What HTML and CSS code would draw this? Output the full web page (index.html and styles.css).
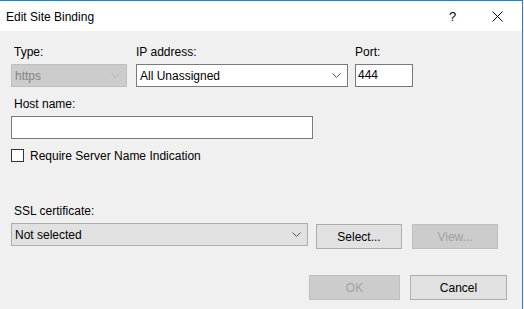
FILE: index.html
```html
<!DOCTYPE html>
<html lang="en">
<head>
    <meta charset="UTF-8">
    <meta name="viewport" content="width=device-width, initial-scale=1.0">
    <title>Edit Site Binding</title>
    <link rel="stylesheet" href="styles.css">
</head>
<body>

    <div class="window">
        <!-- Barre de titre -->
        <div class="titlebar">
            <span class="title">Edit Site Binding</span>
            <span class="help">?</span>
            <span class="close">
                <svg width="11" height="11" viewBox="0 0 11 11"><path d="M0.5 0.5 L10.5 10.5 M10.5 0.5 L0.5 10.5" stroke="#000" stroke-width="1" fill="none"/></svg>
            </span>
        </div>

        <div class="content">
            <div class="row">
                <div class="field type-col">
                    <label class="label indent">Type:</label>
                    <div class="combo disabled">
                        <span>https</span>
                        <svg class="chevron" width="9" height="5" viewBox="0 0 9 5"><path d="M0.5 0.5 L4.5 4.5 L8.5 0.5" stroke="#b4b4b4" fill="none"/></svg>
                    </div>
                </div>
                <div class="field ip-col">
                    <label class="label">IP address:</label>
                    <div class="combo white">
                        <span>All Unassigned</span>
                        <svg class="chevron" width="9" height="5" viewBox="0 0 9 5"><path d="M0.5 0.5 L4.5 4.5 L8.5 0.5" stroke="#555" fill="none"/></svg>
                    </div>
                </div>
                <div class="field port-col">
                    <label class="label">Port:</label>
                    <div class="textbox">444</div>
                </div>
            </div>

            <div class="field host">
                <label class="label indent">Host name:</label>
                <div class="textbox host-box"></div>
            </div>

            <div class="check-row">
                <span class="checkbox"></span>
                <span>Require Server Name Indication</span>
            </div>

            <div class="field ssl">
                <label class="label indent">SSL certificate:</label>
                <div class="ssl-row">
                    <div class="combo grey ssl-combo">
                        <span>Not selected</span>
                        <svg class="chevron" width="9" height="5" viewBox="0 0 9 5"><path d="M0.5 0.5 L4.5 4.5 L8.5 0.5" stroke="#555" fill="none"/></svg>
                    </div>
                    <button class="btn select-btn">Select...</button>
                    <button class="btn off view-btn">View...</button>
                </div>
            </div>

            <div class="footer">
                <button class="btn off ok-btn">OK</button>
                <button class="btn cancel-btn">Cancel</button>
            </div>
        </div>
    </div>

</body>
</html>
```

FILE: styles.css
```css
/* Style général */
body {
    margin: 0;
    padding: 0;
    background: #fff;
    font-family: "Liberation Sans", Arial, sans-serif;
    font-size: 12px;
    color: #000;
}

.window {
    width: 523px;
    height: 309px;
    box-sizing: border-box;
    border-top: 1px solid #1883d7;
    border-right: 1px solid #1883d7;
    background: #f0f0f0;
    overflow: hidden;
}

/* Barre de titre */
.titlebar {
    height: 30px;
    background: #fff;
    display: flex;
    align-items: center;
    padding-left: 6px;
}

.title {
    font-size: 12px;
    flex: 1;
    padding-top: 1px;
}

.help {
    font-size: 13px;
    width: 12px;
    margin-right: 31px;
    padding-top: 1px;
}

.close {
    display: flex;
    margin-right: 19px;
    padding-top: 1px;
}

/* Contenu */
.content {
    padding: 14px 0 0 11px;
}

.row {
    display: flex;
}

.field {
    display: flex;
    flex-direction: column;
}

.label {
    line-height: 15px;
    margin-bottom: 4px;
}

.indent {
    padding-left: 3px;
}

.type-col { width: 116px; margin-right: 9px; }
.ip-col { width: 212px; margin-right: 7px; }
.port-col { width: 58px; }

/* Listes déroulantes */
.combo {
    height: 23px;
    box-sizing: border-box;
    border: 1px solid #7a7a7a;
    display: flex;
    align-items: center;
    padding-left: 3px;
    padding-right: 6px;
}

.combo span {
    flex: 1;
}

.combo.disabled {
    background: #cccccc;
    border-color: #bfbfbf;
    color: #838383;
}

.combo.white {
    background: #fff;
}

.combo.grey {
    background: #e1e1e1;
    border-color: #adadad;
}

.textbox {
    height: 23px;
    box-sizing: border-box;
    border: 1px solid #7a7a7a;
    background: #fff;
    padding: 0 0 0 2px;
    line-height: 21px;
}

.host {
    margin-top: 10px;
}

.host-box {
    width: 302px;
}

/* Case à cocher */
.check-row {
    display: flex;
    align-items: center;
    margin-top: 9px;
    height: 15px;
}

.checkbox {
    width: 13px;
    height: 13px;
    box-sizing: border-box;
    border: 1px solid #333;
    background: #fff;
    margin-right: 6px;
}

/* Certificat SSL */
.ssl {
    margin-top: 41px;
}

.ssl-row {
    display: flex;
    align-items: flex-start;
}

.ssl-combo {
    width: 297px;
    margin-right: 8px;
}

.btn {
    font-family: "Liberation Sans", Arial, sans-serif;
    font-size: 12px;
    height: 25px;
    box-sizing: border-box;
    border: 1px solid #adadad;
    background: #e1e1e1;
    color: #000;
    padding: 0;
    margin: 0;
}

.btn.off {
    background: #cccccc;
    border-color: #bfbfbf;
    color: #a0a0a0;
}

.select-btn {
    width: 86px;
    margin-top: 1px;
    margin-right: 10px;
}

.view-btn {
    width: 86px;
    margin-top: 1px;
}

/* Boutons du bas */
.footer {
    display: flex;
    margin-top: 26px;
    padding-left: 298px;
}

.ok-btn {
    width: 91px;
    margin-right: 10px;
}

.cancel-btn {
    width: 97px;
}
```
